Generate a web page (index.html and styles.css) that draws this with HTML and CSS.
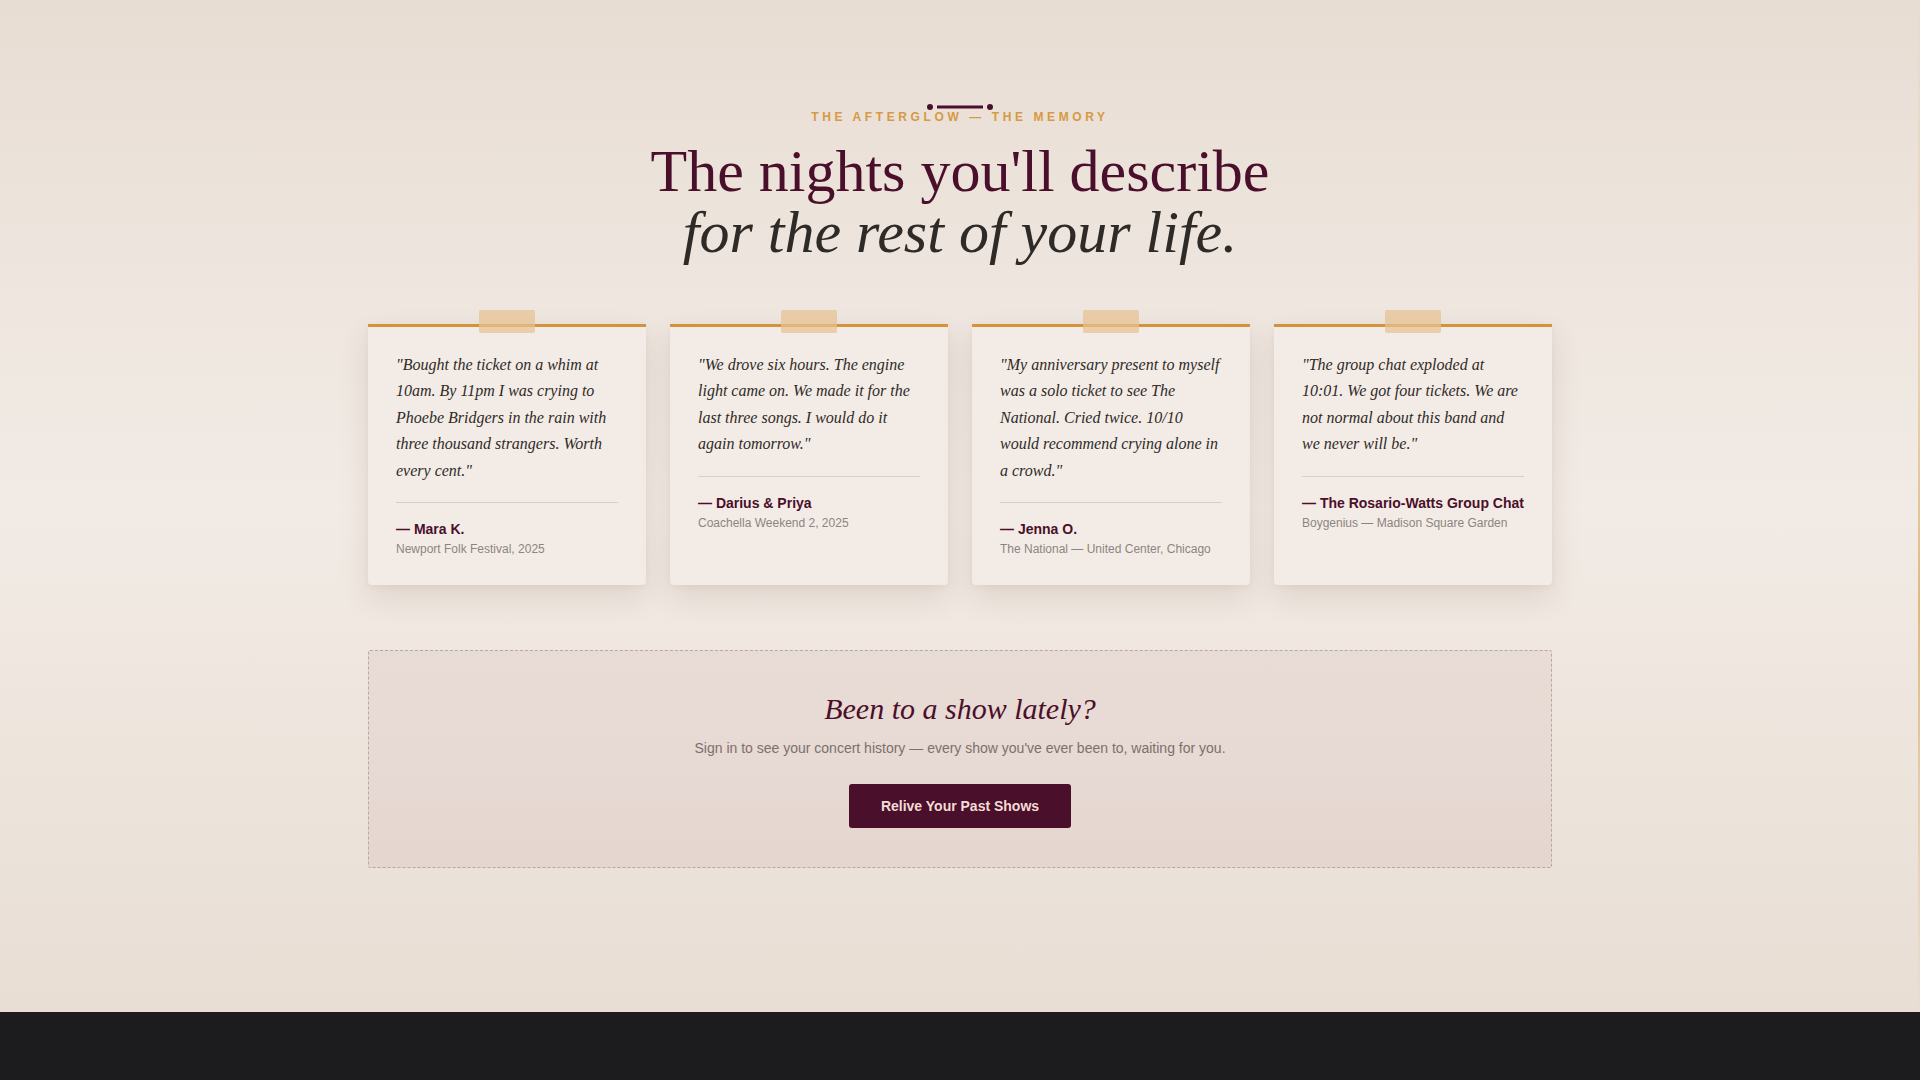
FILE: index.html
```html
<!DOCTYPE html>
<html lang="en">
<head>
    <meta charset="UTF-8">
    <meta name="viewport" content="width=device-width, initial-scale=1.0">
    <title>The Afterglow</title>
    <link rel="stylesheet" href="styles.css">
</head>
<body>

    <section class="memories">
        <div class="intro">
            <svg class="intro-mark" width="68" height="8" viewBox="0 0 68 8">
                <circle cx="4" cy="4" r="3" fill="#4a0f2a"/>
                <line x1="11" y1="4" x2="57" y2="4" stroke="#4a0f2a" stroke-width="3"/>
                <circle cx="64" cy="4" r="3" fill="#4a0f2a"/>
            </svg>
            <p class="eyebrow">The Afterglow — The Memory</p>
            <h2 class="title">
                <span class="title-main">The nights you'll describe</span>
                <em class="title-sub">for the rest of your life.</em>
            </h2>
        </div>

        <div class="notes">
            <article class="note">
                <span class="tape"></span>
                <p class="quote">"Bought the ticket on a whim at 10am. By 11pm I was crying to Phoebe Bridgers in the rain with three thousand strangers. Worth every cent."</p>
                <div class="note-foot">
                    <p class="who">— Mara K.</p>
                    <p class="where">Newport Folk Festival, 2025</p>
                </div>
            </article>

            <article class="note">
                <span class="tape"></span>
                <p class="quote">"We drove six hours. The engine light came on. We made it for the last three songs. I would do it again tomorrow."</p>
                <div class="note-foot">
                    <p class="who">— Darius &amp; Priya</p>
                    <p class="where">Coachella Weekend 2, 2025</p>
                </div>
            </article>

            <article class="note">
                <span class="tape"></span>
                <p class="quote">"My anniversary present to myself was a solo ticket to see The National. Cried twice. 10/10 would recommend crying alone in a crowd."</p>
                <div class="note-foot">
                    <p class="who">— Jenna O.</p>
                    <p class="where">The National — United Center, Chicago</p>
                </div>
            </article>

            <article class="note">
                <span class="tape"></span>
                <p class="quote">"The group chat exploded at 10:01. We got four tickets. We are not normal about this band and we never will be."</p>
                <div class="note-foot">
                    <p class="who">— The Rosario-Watts Group Chat</p>
                    <p class="where">Boygenius — Madison Square Garden</p>
                </div>
            </article>
        </div>

        <div class="relive">
            <h3>Been to a show lately?</h3>
            <p>Sign in to see your concert history — every show you've ever been to, waiting for you.</p>
            <button type="button">Relive Your Past Shows</button>
        </div>
    </section>

    <footer class="site-footer"></footer>

    <div class="edge-glow"></div>

</body>
</html>
```

FILE: styles.css
```css
body {
    margin: 0;
    font-family: "Liberation Sans", Arial, sans-serif;
    background-color: #1c1c1e;
    overflow: hidden;
}
.memories {
    background: linear-gradient(180deg, #e8ddd3 0%, #eee6df 30%, #f2ebe5 50%, #ede4dc 75%, #e8ded4 100%);
    padding: 109px 0 144px;
}
.intro {
    position: relative;
    text-align: center;
}
.intro-mark {
    position: absolute;
    top: -6px;
    left: 50%;
    margin-left: -34px;
}
.eyebrow {
    margin: 0 0 16px;
    font-size: 12px;
    line-height: 16px;
    font-weight: 700;
    letter-spacing: 0.3em;
    text-transform: uppercase;
    color: #d69a44;
}
.title {
    margin: 0;
    font-family: "Liberation Serif", "Times New Roman", serif;
    font-weight: 400;
    font-size: 60px;
    line-height: 61px;
}
.title-main {
    display: block;
    color: #4a0f2a;
}
.title-sub {
    display: block;
    color: #2d2a28;
}
.notes {
    max-width: 1184px;
    margin: 61px auto 0;
    display: grid;
    grid-template-columns: repeat(4, 1fr);
    gap: 24px;
}
.note {
    position: relative;
    background-color: #f3ece6;
    border-top: 3px solid #d4923a;
    border-radius: 0 0 4px 4px;
    padding: 25px 28px 27px;
    box-shadow: 0 12px 30px rgba(90, 55, 35, 0.12), 0 2px 6px rgba(90, 55, 35, 0.05);
}
.tape {
    position: absolute;
    top: -17px;
    left: 50%;
    width: 56px;
    height: 23px;
    margin-left: -28px;
    border-radius: 2px;
    background-color: rgba(230, 192, 145, 0.72);
}
.quote {
    margin: 0 0 18px;
    font-family: "Liberation Serif", "Times New Roman", serif;
    font-style: italic;
    font-size: 16px;
    line-height: 26.4px;
    color: #2f2a28;
}
.note-foot {
    border-top: 1px solid #d9cec7;
    padding-top: 16px;
}
.who {
    margin: 0;
    font-size: 14px;
    line-height: 20px;
    font-weight: 700;
    color: #4a0f2a;
}
.where {
    margin: 2px 0 0;
    font-size: 12px;
    line-height: 17px;
    color: #8c8480;
}
.relive {
    max-width: 1182px;
    margin: 65px auto 0;
    padding: 40px 0 39px;
    border: 1px dashed #b8a8a0;
    border-radius: 2px;
    background-color: rgba(130, 50, 60, 0.06);
    text-align: center;
}
.relive h3 {
    margin: 0;
    font-family: "Liberation Serif", "Times New Roman", serif;
    font-style: italic;
    font-weight: 400;
    font-size: 30px;
    line-height: 36px;
    color: #4a0f2a;
}
.relive p {
    margin: 11px 0 0;
    font-size: 14px;
    line-height: 20px;
    color: #7c706c;
}
.relive button {
    margin-top: 26px;
    background-color: #4a0f2a;
    color: #f2dcd6;
    font-family: inherit;
    font-size: 14px;
    font-weight: 700;
    line-height: 18px;
    padding: 13px 32px;
    border: none;
    border-radius: 3px;
    cursor: pointer;
}
.relive button:hover {
    background-color: #5c1636;
}
.site-footer {
    height: 68px;
    background-color: #1c1c1e;
}
.edge-glow {
    position: fixed;
    top: 0;
    right: 0;
    width: 2px;
    height: 1012px;
    background: linear-gradient(180deg, rgba(212, 153, 63, 0) 0%, rgba(212, 153, 63, 0.25) 35%, rgba(212, 153, 63, 0.6) 60%, rgba(212, 153, 63, 0.2) 85%, rgba(212, 153, 63, 0) 100%);
}
```
